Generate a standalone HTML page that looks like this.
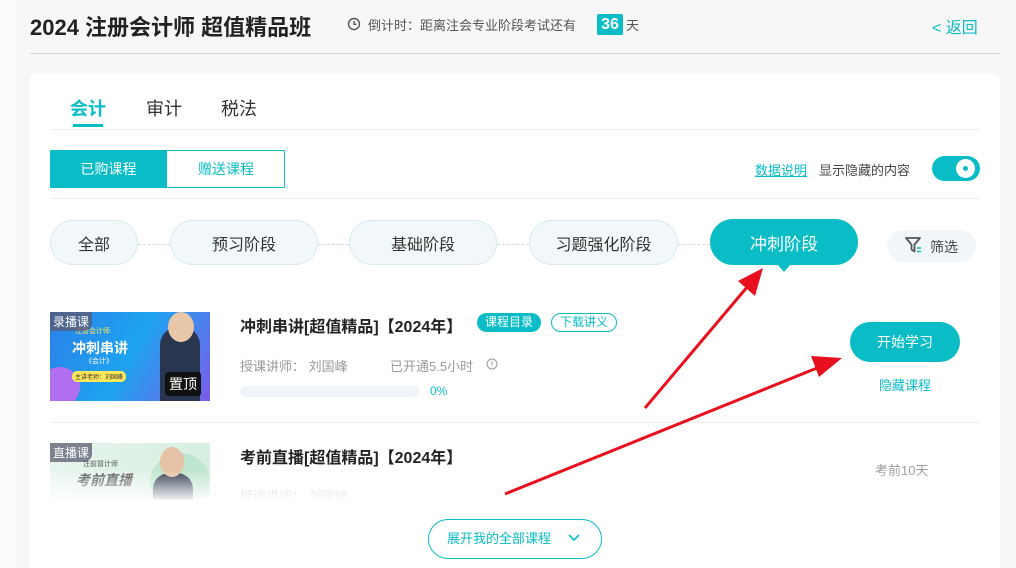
<!DOCTYPE html>
<html><head><meta charset="utf-8"><style>
*{margin:0;padding:0;box-sizing:border-box}
html,body{width:1016px;height:568px;overflow:hidden}
body{background:#f7f7f7;font-family:"Liberation Sans","Noto Sans CJK SC",sans-serif;position:relative;color:#333}
.a{position:absolute;white-space:nowrap}
.teal{color:#0abcc6}
.card{position:absolute;left:30px;top:74px;width:970px;height:494px;background:#fff;border-radius:6px 6px 0 0}
.pill{position:absolute;top:220px;height:45px;border:1px solid #d8eaee;background:#f2f8fa;border-radius:23px;font-size:16px;color:#333;display:flex;align-items:center;justify-content:center}
.dash{position:absolute;top:244px;height:0;border-top:1px dashed #d5d5d5}
</style></head><body>
<div class="a" style="left:0;top:0;width:15px;height:568px;background:#fbfbfb"></div>
<div class="a" style="left:30px;top:10px;font-size:22px;font-weight:bold;color:#222">2024 注册会计师 超值精品班</div>
<svg class="a" style="left:347px;top:17px" width="14" height="14" viewBox="0 0 14 14"><circle cx="7" cy="7" r="5.5" fill="none" stroke="#555" stroke-width="1.4"/><path d="M7 4v3.3h2.5" fill="none" stroke="#555" stroke-width="1.4"/></svg>
<div class="a" style="left:368px;top:15px;font-size:13px;color:#555">倒计时：距离注会专业阶段考试还有</div>
<div class="a" style="left:597px;top:14px;width:26px;height:21px;background:#0abcc6;color:#fff;font-weight:bold;font-size:16px;text-align:center;line-height:21px;border-radius:2px">36</div>
<div class="a" style="left:626px;top:15px;font-size:13px;color:#555">天</div>
<div class="a teal" style="left:932px;top:14px;font-size:16px">&lt; 返回</div>
<div class="a" style="left:30px;top:53px;width:970px;height:1px;background:#d6d6d6"></div>
<div class="card"></div>
<div class="a teal" style="left:70px;top:95px;font-size:18px;font-weight:bold">会计</div>
<div class="a" style="left:146px;top:95px;font-size:18px">审计</div>
<div class="a" style="left:221px;top:95px;font-size:18px">税法</div>
<div class="a" style="left:73px;top:124px;width:30px;height:3px;background:#0abcc6"></div>
<div class="a" style="left:50px;top:129px;width:930px;height:1px;background:#ececec"></div>
<div class="a" style="left:50px;top:150px;width:235px;height:38px;border:1px solid #0abcc6;border-radius:2px"></div>
<div class="a" style="left:50px;top:150px;width:117px;height:38px;background:#0abcc6;color:#fff;font-size:14px;text-align:center;line-height:38px">已购课程</div>
<div class="a teal" style="left:167px;top:150px;width:118px;font-size:14px;text-align:center;line-height:38px">赠送课程</div>
<div class="a teal" style="left:755px;top:160px;font-size:13px;text-decoration:underline">数据说明</div>
<div class="a" style="left:819px;top:160px;font-size:13px;color:#444">显示隐藏的内容</div>
<div class="a" style="left:932px;top:156px;width:48px;height:25px;border-radius:13px;background:#0abcc6"></div>
<div class="a" style="left:956px;top:159px;width:19px;height:19px;border-radius:50%;background:#fff"></div>
<div class="a" style="left:963px;top:166px;width:5px;height:5px;border-radius:50%;background:#0abcc6"></div>
<div class="a" style="left:50px;top:198px;width:930px;height:1px;background:#ececec"></div>
<div class="dash" style="left:138px;width:32px"></div>
<div class="dash" style="left:318px;width:31px"></div>
<div class="dash" style="left:497px;width:32px"></div>
<div class="dash" style="left:678px;width:32px"></div>
<div class="pill" style="left:50px;width:88px">全部</div>
<div class="pill" style="left:170px;width:148px">预习阶段</div>
<div class="pill" style="left:349px;width:148px">基础阶段</div>
<div class="pill" style="left:529px;width:149px">习题强化阶段</div>
<div class="pill" style="left:710px;top:219px;width:148px;height:46px;background:#0abcc6;border-color:#0abcc6;color:#fff;font-size:17px">冲刺阶段</div>
<div class="a" style="left:777px;top:264px;width:0;height:0;border-left:7px solid transparent;border-right:7px solid transparent;border-top:8px solid #0abcc6"></div>
<div class="a" style="left:887px;top:230px;width:89px;height:32px;border-radius:16px;background:#f2f6f9"></div>
<svg class="a" style="left:905px;top:237px" width="18" height="17" viewBox="0 0 18 17"><path d="M1 1h14l-5.5 6.5v7l-3-2v-5z" fill="none" stroke="#555" stroke-width="1.8" stroke-linejoin="round"/><path d="M12 11h4M12 14.5h4" stroke="#0abcc6" stroke-width="1.6"/></svg>
<div class="a" style="left:930px;top:237px;font-size:14px;color:#444">筛选</div>
<div class="a" style="left:50px;top:312px;width:160px;height:89px;background:linear-gradient(120deg,#2a7fe8,#1ea4f0 50%,#7a5ce8);overflow:hidden">
<div style="position:absolute;left:-10px;top:55px;width:40px;height:40px;border-radius:50%;background:#b06ef0"></div>
<div style="position:absolute;left:110px;top:15px;width:40px;height:80px;background:#2a3550;border-radius:18px 18px 0 0"></div>
<div style="position:absolute;left:118px;top:0;width:26px;height:30px;background:#e8c6a8;border-radius:50%"></div>
<div style="position:absolute;left:25px;top:14px;font-size:7px;color:#ffe85a">注册会计师</div>
<div style="position:absolute;left:22px;top:26px;font-size:14px;font-weight:bold;color:#fff">冲刺串讲</div>
<div style="position:absolute;left:35px;top:44px;font-size:7px;color:#fff">《会计》</div>
<div style="position:absolute;left:22px;top:59px;font-size:6px;background:#ffe85a;color:#333;padding:1px 3px;border-radius:5px">主讲老师：刘国峰</div>
</div>
<div class="a" style="left:50px;top:312px;background:rgba(90,90,110,.75);color:#fff;font-size:12px;padding:1px 3px;border-radius:0 0 8px 0">录播课</div>
<div class="a" style="left:165px;top:372px;background:#111;color:#fff;font-size:14px;padding:2px 4px;border-radius:3px">置顶</div>
<div class="a" style="left:240px;top:313px;font-size:16px;font-weight:bold;color:#222">冲刺串讲[超值精品]【2024年】</div>
<div class="a" style="left:477px;top:313px;width:64px;height:19px;border-radius:10px;background:#0abcc6;color:#fff;font-size:12px;text-align:center;line-height:19px">课程目录</div>
<div class="a teal" style="left:551px;top:313px;width:66px;height:19px;border-radius:10px;border:1px solid #0abcc6;font-size:12px;text-align:center;line-height:17px">下载讲义</div>
<div class="a" style="left:240px;top:356px;font-size:13px;color:#999">授课讲师：&nbsp;刘国峰</div>
<div class="a" style="left:390px;top:356px;font-size:13px;color:#999">已开通5.5小时</div>
<svg class="a" style="left:486px;top:358px" width="12" height="12" viewBox="0 0 12 12"><circle cx="6" cy="6" r="5" fill="none" stroke="#999"/><path d="M6 3v4M6 8.3v1" stroke="#999"/></svg>
<div class="a" style="left:240px;top:386px;width:180px;height:11px;border-radius:6px;background:#eef4f7"></div>
<div class="a teal" style="left:430px;top:384px;font-size:12px">0%</div>
<div class="a" style="left:850px;top:322px;width:110px;height:40px;border-radius:20px;background:#0abcc6;color:#fff;font-size:14px;text-align:center;line-height:40px">开始学习</div>
<div class="a teal" style="left:850px;top:375px;width:110px;text-align:center;font-size:13px">隐藏课程</div>
<div class="a" style="left:50px;top:422px;width:930px;height:1px;background:#ececec"></div>
<div class="a" style="left:50px;top:443px;width:160px;height:57px;background:linear-gradient(90deg,#e9f5ee,#d6efe0);overflow:hidden">
<div style="position:absolute;left:100px;top:10px;width:60px;height:60px;border-radius:50%;background:#bfe6cf"></div>
<div style="position:absolute;left:103px;top:30px;width:40px;height:40px;background:#3a4458;border-radius:16px 16px 0 0"></div>
<div style="position:absolute;left:110px;top:4px;width:24px;height:30px;background:#e6c3a6;border-radius:50%"></div>
<div style="position:absolute;left:33px;top:16px;font-size:7px;color:#555">注前冒计师</div>
<div style="position:absolute;left:26px;top:27px;font-size:14px;font-weight:bold;color:#555;font-style:italic">考前直播</div>
</div>
<div class="a" style="left:50px;top:443px;background:rgba(90,90,110,.75);color:#fff;font-size:12px;padding:1px 3px;border-radius:0 0 8px 0">直播课</div>
<div class="a" style="left:240px;top:444px;font-size:16px;font-weight:bold;color:#222">考前直播[超值精品]【2024年】</div>
<div class="a" style="left:240px;top:486px;font-size:13px;color:#bbb">授课讲师：&nbsp;刘国峰</div>
<div class="a" style="left:875px;top:460px;font-size:13px;color:#999">考前10天</div>
<div class="a" style="left:40px;top:470px;width:950px;height:32px;background:linear-gradient(rgba(255,255,255,0),#fff)"></div>
<div class="a" style="left:40px;top:502px;width:950px;height:66px;background:#fff"></div>
<div class="a teal" style="left:428px;top:519px;width:174px;height:40px;border:1px solid #0abcc6;border-radius:20px;font-size:13px;line-height:38px;padding-left:18px">展开我的全部课程</div>
<svg class="a" style="left:567px;top:533px" width="14" height="10" viewBox="0 0 14 10"><path d="M2 2l5 5 5-5" fill="none" stroke="#0abcc6" stroke-width="1.6"/></svg>
<div class="a" style="left:1000px;top:0;width:16px;height:568px;background:#f7f7f7"></div>
<svg class="a" style="left:0;top:0" width="1016" height="568">
<g stroke="#e8101e" stroke-width="3" fill="#e8101e">
<line x1="645" y1="408" x2="748" y2="286"/>
<polygon points="763,268 755,296 738,281" stroke="none"/>
<line x1="505" y1="494" x2="822" y2="366"/>
<polygon points="842,358 819,377 811,356" stroke="none"/>
</g></svg>
</body></html>
